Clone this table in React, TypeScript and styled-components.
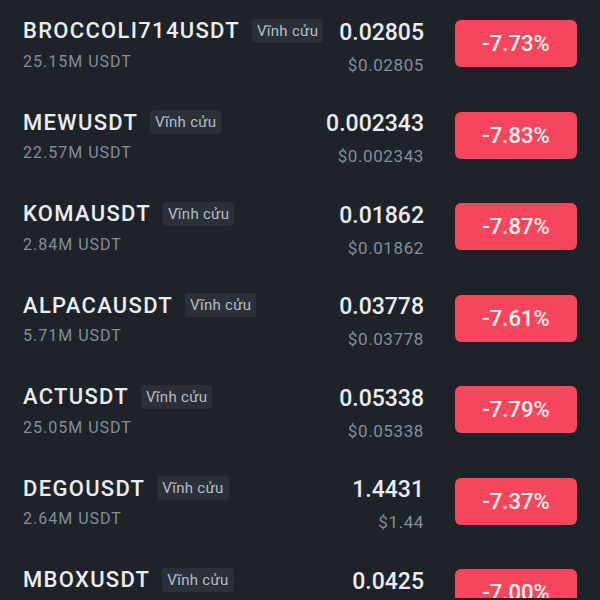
import React from "react";
import styled, { createGlobalStyle } from "styled-components";

const GlobalStyle = createGlobalStyle`
  html, body {
    margin: 0;
    padding: 0;
    background: #1e2229;
  }
  body {
    font-family: Roboto, "Noto Sans", sans-serif;
    -webkit-font-smoothing: antialiased;
  }
`;

const List = styled.div`
  width: 600px;
  height: 600px;
  overflow: hidden;
  background: #1e2229;
  margin-top: -2px;
`;

const Row = styled.div`
  height: 91.5px;
  display: flex;
  align-items: center;
  padding: 0 23px;
  box-sizing: border-box;
`;

const Info = styled.div`
  flex: 1;
  display: flex;
  flex-direction: column;
  padding-top: 2px;
`;

const NameLine = styled.div`
  display: flex;
  align-items: center;
  gap: 12px;
  height: 28px;
`;

const Symbol = styled.span`
  font-size: 22px;
  font-weight: 500;
  color: #eaecef;
  letter-spacing: 1.3px;
`;

const Tag = styled.span`
  background: #2b3038;
  color: #b7bdc6;
  font-size: 15px;
  line-height: 24px;
  height: 24px;
  padding: 0 5px;
  border-radius: 3px;
  letter-spacing: 0.3px;
`;

const Volume = styled.div`
  margin-top: 6px;
  font-size: 16px;
  line-height: 22px;
  color: #848e9c;
  letter-spacing: 1px;
`;

const PriceCol = styled.div`
  display: flex;
  flex-direction: column;
  align-items: flex-end;
  margin-right: 31px;
  padding-top: 7px;
`;

const Price = styled.div`
  font-size: 23px;
  font-weight: 500;
  line-height: 28px;
  color: #eaecef;
`;

const SubPrice = styled.div`
  margin-top: 7px;
  font-size: 17px;
  line-height: 22px;
  color: #848e9c;
  letter-spacing: 0.6px;
`;

const Change = styled.div<{ $up?: boolean }>`
  width: 122px;
  height: 47px;
  border-radius: 6px;
  background: ${(p) => (p.$up ? "#0ecb81" : "#f6465d")};
  color: #fdf1f2;
  font-size: 22px;
  font-weight: 500;
  display: flex;
  align-items: center;
  justify-content: center;
`;

const rows = [
  { sym: "BROCCOLI714USDT", vol: "25.15M USDT", price: "0.02805", usd: "$0.02805", chg: "-7.73%" },
  { sym: "MEWUSDT", vol: "22.57M USDT", price: "0.002343", usd: "$0.002343", chg: "-7.83%" },
  { sym: "KOMAUSDT", vol: "2.84M USDT", price: "0.01862", usd: "$0.01862", chg: "-7.87%" },
  { sym: "ALPACAUSDT", vol: "5.71M USDT", price: "0.03778", usd: "$0.03778", chg: "-7.61%" },
  { sym: "ACTUSDT", vol: "25.05M USDT", price: "0.05338", usd: "$0.05338", chg: "-7.79%" },
  { sym: "DEGOUSDT", vol: "2.64M USDT", price: "1.4431", usd: "$1.44", chg: "-7.37%" },
  { sym: "MBOXUSDT", vol: "3.12M USDT", price: "0.0425", usd: "$0.0425", chg: "-7.00%" },
];

export default function App() {
  return (
    <>
      <GlobalStyle />
      <List>
        {rows.map((r) => (
          <Row key={r.sym}>
            <Info>
              <NameLine>
                <Symbol>{r.sym}</Symbol>
                <Tag>Vĩnh cửu</Tag>
              </NameLine>
              <Volume>{r.vol}</Volume>
            </Info>
            <PriceCol>
              <Price>{r.price}</Price>
              <SubPrice>{r.usd}</SubPrice>
            </PriceCol>
            <Change>{r.chg}</Change>
          </Row>
        ))}
      </List>
    </>
  );
}
